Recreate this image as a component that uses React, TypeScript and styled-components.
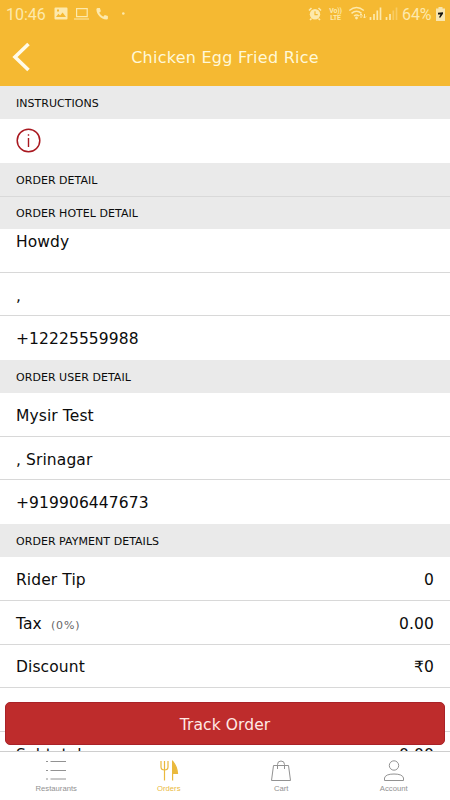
import React from "react";
import styled, { createGlobalStyle } from "styled-components";

const GlobalStyle = createGlobalStyle`
  * { box-sizing: border-box; }
  body { margin: 0; background: #fff; }
`;

const Screen = styled.div`
  position: relative;
  display: flex;
  flex-direction: column;
  width: 450px;
  height: 800px;
  overflow: hidden;
  background: #fff;
  color: #0c0c0c;
  font-family: "DejaVu Sans", sans-serif;
`;

const TopArea = styled.header`
  flex: none;
  height: 86px;
  background: #f5b932;
  color: #fff8d8;
`;

const StatusBar = styled.div`
  display: flex;
  align-items: center;
  justify-content: space-between;
  height: 28px;
  padding: 0 5px 0 6px;
  color: #fde9ac;
  font: 16px/28px Roboto, sans-serif;
`;

const StatusGroup = styled.div`
  display: flex;
  align-items: center;
  svg { display: block; flex: none; }
`;

const Clock = styled.span`
  width: 48px;
  padding-top: 1px;
  font-size: 16px;
`;

const Percent = styled.span`
  width: 34px;
  padding-top: 1px;
  font-size: 16px;
  letter-spacing: -0.1px;
`;

const Volte = styled.span`
  display: flex;
  flex-direction: column;
  width: 15px;
  margin: 0 5px 0 6px;
  font: 700 7px/8px Roboto, sans-serif;
  letter-spacing: -0.2px;
  text-align: center;
  white-space: nowrap;
  span + span { margin-top: -1px; }
`;

const TitleBar = styled.div`
  display: grid;
  grid-template-columns: 44px 1fr 44px;
  align-items: center;
  height: 58px;
`;

const BackButton = styled.button`
  display: flex;
  padding: 0 0 0 11px;
  border: 0;
  background: none;
`;

const Title = styled.h1`
  margin: 0;
  font-size: 16px;
  font-weight: 400;
  letter-spacing: 0.25px;
  text-align: center;
`;

const Content = styled.main`
  flex: none;
  height: 665px;
  overflow: hidden;
`;

const Section = styled.h2<{ $divided?: boolean }>`
  display: flex;
  align-items: center;
  height: 33px;
  margin: 0;
  padding: ${(p) => (p.$divided ? "0" : "2px")} 16px 0;
  background: #eaeaea;
  border-top: ${(p) => (p.$divided ? "1px solid #d9d9d9" : "0")};
  font-size: 11px;
  font-weight: 400;
  letter-spacing: 0.04px;
`;

const InfoRow = styled.div`
  display: flex;
  align-items: center;
  height: 44px;
  padding: 0 0 1px 16px;
`;

const Row = styled.div<{ $last?: boolean; $raised?: boolean }>`
  display: flex;
  align-items: center;
  justify-content: space-between;
  height: 43.7px;
  padding: ${(p) => (p.$raised ? "0 16px 17px" : "3px 16px 0")};
  border-bottom: 1px solid ${(p) => (p.$last ? "transparent" : "#d8d8d8")};
  font-size: 15.5px;
  letter-spacing: 0.1px;
`;

const Note = styled.small`
  margin-left: 9px;
  color: #666;
  font-size: 11px;
  letter-spacing: 0.9px;
`;

const TrackButton = styled.button`
  position: absolute;
  left: 5px;
  bottom: 55px;
  width: 440px;
  height: 43px;
  padding: 2px 0 0;
  border: 1px solid #a92228;
  border-radius: 5px;
  background: #be2c2c;
  color: #ffe9e5;
  font: 15.5px "DejaVu Sans", sans-serif;
  letter-spacing: 0.1px;
`;

const TabBar = styled.nav`
  display: grid;
  grid-template-columns: repeat(4, 1fr);
  height: 49px;
  border-top: 1px solid #cecece;
  background: #fff;
`;

const Tab = styled.a<{ $active?: boolean }>`
  display: flex;
  flex-direction: column;
  align-items: center;
  padding-top: 7px;
  color: ${(p) => (p.$active ? "#eab93d" : "#929292")};
  font: 7.7px/11px "Liberation Sans", sans-serif;
  svg { display: block; margin-bottom: 2px; }
`;

const lineIcon = { fill: "none", stroke: "currentColor" } as const;

const StatusIcons = () => (
  <StatusBar>
    <StatusGroup>
      <Clock>10:46</Clock>
      <svg width="74" height="16" viewBox="54 6 74 16" fill="currentColor">
        <path fillRule="evenodd" d="M55.5 7.500h11a1 1 0 0 1 1 1v10a1 1 0 0 1-1 1h-11a1 1 0 0 1-1-1v-10a1 1 0 0 1 1-1zM56 17h10l-3.400-4.500-2.500 3-1.700-1.800zM57 9.500v2h2v-2z" />
        <path {...lineIcon} strokeWidth="1.200" d="M76.600 8.600h10.600v8H76.600zM74 19h15" />
        <path d="M97.500 8h2.400l1 3.200-1.700 1.500q1.500 2.700 4 4l1.600-1.600 3.100.9v2.400q0 1.200-1.600 1.100c-5.400-.3-9.600-4.900-9.900-10q0-1.300 1.100-1.500z" />
        <circle cx="123.300" cy="13.500" r="1.300" />
      </svg>
    </StatusGroup>
    <StatusGroup>
      <svg width="14" height="14" viewBox="0 0 14 14">
        <circle cx="7" cy="7.300" r="5.200" fill="currentColor" />
        <path {...lineIcon} strokeWidth="1.600" d="M1 3.500 3.500 1M13 3.500 10.500 1M3.500 11.500 2 13M10.500 11.500 12 13" />
        <path fill="none" stroke="#f5b932" strokeWidth="1.200" d="M7 4.200v3.400h2.700" />
      </svg>
      <Volte><span>Vo))</span><span>LTE</span></Volte>
      <svg width="54" height="16" viewBox="347 6 54 16">
        <path {...lineIcon} strokeWidth="1.500" d="M348.300 10.500q7.300-6 14.500 0M350.500 13.300q5-4 10 0M353 16q2.500-2 5 0" />
        <circle cx="355.500" cy="18" r="1.400" fill="currentColor" />
        <path {...lineIcon} strokeWidth="1" d="M360 18v-4m-1.500 1.500 1.500-1.500 1.500 1.500M363.500 14v4m-1.500-1.500 1.500 1.500 1.500-1.500" />
        <path {...lineIcon} strokeWidth="1.700" d="M369.500 20v-3M373 20v-6M376.300 20v-9.500M379.500 20V7.500M385.500 20v-3M389 20v-6" />
        <path {...lineIcon} strokeWidth="1.700" opacity=".4" d="M392.300 20v-9.500M395.500 20V7.500" />
      </svg>
      <Percent>64%</Percent>
      <svg width="9" height="14" viewBox="0 0 9 14">
        <path d="M2.500 0h4v1.500H9V14H0V1.500h2.500z" fill="#f8e6af" />
        <path fill="#15130f" d="M2 5.700 7 5.200v1.500L4.200 10.700 3 10.300 4.500 7.500H2z" />
      </svg>
    </StatusGroup>
  </StatusBar>
);

export default function App() {
  return (
    <>
      <GlobalStyle />
      <Screen>
        <TopArea>
          <StatusIcons />
          <TitleBar>
            <BackButton aria-label="Back">
              <svg width="20" height="30" viewBox="0 0 20 30">
                <path d="M17.500 2 4 15l13.500 13" fill="none" stroke="#fffbe9" strokeWidth="3.600" />
              </svg>
            </BackButton>
            <Title>Chicken Egg Fried Rice</Title>
          </TitleBar>
        </TopArea>
        <Content>
          <Section>INSTRUCTIONS</Section>
          <InfoRow>
            <svg width="25" height="25" viewBox="0 0 25 25" fill="none" stroke="#a91820">
              <circle cx="12.500" cy="12.500" r="11.300" strokeWidth="1.500" />
              <path d="M12.500 6.200v1.600M12.500 10v9" strokeWidth="1.400" />
            </svg>
          </InfoRow>
          <Section>ORDER DETAIL</Section>
          <Section $divided>ORDER HOTEL DETAIL</Section>
          <Row $raised>Howdy</Row>
          <Row>,</Row>
          <Row $last>+12225559988</Row>
          <Section>ORDER USER DETAIL</Section>
          <Row>Mysir Test</Row>
          <Row>, Srinagar</Row>
          <Row $last>+919906447673</Row>
          <Section>ORDER PAYMENT DETAILS</Section>
          <Row><span>Rider Tip</span><span>0</span></Row>
          <Row><span>Tax<Note>(0%)</Note></span><span>0.00</span></Row>
          <Row><span>Discount</span><span>₹0</span></Row>
          <Row />
          <Row><span>Subtotal</span><span>0.00</span></Row>
        </Content>
        <TrackButton>Track Order</TrackButton>
        <TabBar>
          <Tab>
            <svg width="22" height="22" viewBox="0 0 22 22" {...lineIcon}>
              <path d="M1 2.500h2M5.500 2.500H21M1 11.500h2M5.500 11.500H21M1 20h2M5.500 20H21" />
            </svg>
            Restaurants
          </Tab>
          <Tab $active>
            <svg width="22" height="22" viewBox="0 0 22 22" {...lineIcon} strokeWidth="1.200">
              <path d="M3 2v6q0 3 3.500 3T10 8V2M6.500 2v19.500M14.600 2v19.500" />
              <path fill="currentColor" d="M14.600 2.500Q19 7 19.500 14.500h-4.900z" />
            </svg>
            Orders
          </Tab>
          <Tab>
            <svg width="22" height="22" viewBox="0 0 22 22" {...lineIcon}>
              <path d="M3.500 6.500h15l2 15h-19zM7.500 10V5.500q0-3.500 3.500-3.500t3.500 3.500V10" />
            </svg>
            Cart
          </Tab>
          <Tab>
            <svg width="22" height="22" viewBox="0 0 22 22" {...lineIcon}>
              <circle cx="11" cy="6.500" r="4.700" />
              <path d="M1.500 21.500v-2.500q1-4 9.500-4t9.500 4v2.500z" />
            </svg>
            Account
          </Tab>
        </TabBar>
      </Screen>
    </>
  );
}
